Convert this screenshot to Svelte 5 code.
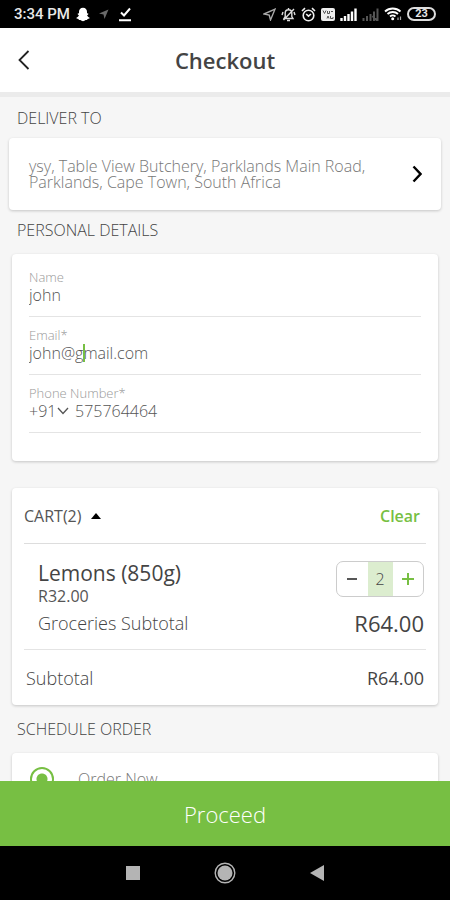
<script>
    let name = $state('john');
    let email = $state('john@gmail.com');
    let dialCode = $state('+91');
    let phone = $state('575764464');
    let schedule = $state('now');
    let cartOpen = $state(true);
    let quantity = $state(2);

    const price = 32;
    let total = $derived('R' + (price * quantity).toFixed(2));

    function decrease() {
        if (quantity > 0) quantity -= 1;
    }
</script>

<div class="screen">
    <div class="status">
        <span class="time">3:34 PM</span>
        <svg class="snap" width="14" height="15" viewBox="0 0 14 15">
            <path fill="#fff" d="M7 .8c2.600 0 4 1.800 4 4v1.500l1.300.2-.1 1-1.100.7c.4 1.300 1.300 2 2.500 2.500l-.2.9-1.900.5-.4 1-1.600-.1C8.700 13.700 8 14.200 7 14.200s-1.700-.5-2.500-1.200l-1.600.1-.4-1-1.900-.5-.2-.9c1.200-.5 2.100-1.200 2.500-2.500l-1.100-.7-.1-1L3 6.300V4.800c0-2.200 1.400-4 4-4z" />
        </svg>
        <svg class="loc" width="10" height="10" viewBox="0 0 10 10">
            <path fill="#6a6a6a" d="M0 4.500 9.500.5 5.500 10 4.500 5.500z" />
        </svg>
        <svg class="done" width="14" height="15" viewBox="0 0 14 15">
            <path fill="none" stroke="#fff" stroke-width="2" d="M3 5.500 6 8.500 12 1.500M1 13.200h12" />
        </svg>

        <div class="right">
            <svg width="13" height="13" viewBox="0 0 13 13">
                <path fill="none" stroke="#aaa" stroke-width="1.400" d="M1 6 12 1.200 7.500 12 6.200 7z" />
            </svg>
            <svg width="15" height="15" viewBox="0 0 15 15">
                <g fill="none" stroke="#ddd" stroke-width="1.400">
                    <path d="M3 11.500h9l-1.200-2V6.200c0-2-1.300-3.500-3.300-3.500S4.200 4.200 4.200 6.200v3.300zM6 13.500h3M7.500 1v1.500M1 8l1-3M14 8l-1-3M2.500 13 13 2" />
                </g>
            </svg>
            <svg width="15" height="15" viewBox="0 0 15 15">
                <g fill="none" stroke="#eee" stroke-width="1.600">
                    <circle cx="7.500" cy="8.500" r="5.300" />
                    <path d="M1 4 4 1.200M14 4 11 1.200M5.200 7l2.300 2.200L10 7" />
                </g>
            </svg>
            <svg width="14" height="13" viewBox="0 0 14 13">
                <rect width="14" height="13" rx="2" fill="#eee" />
                <path fill="none" stroke="#555" stroke-width="1" d="m2 2.500 1.500 3 1.500-3M6.500 3v2.500h2V3M6 10.500 7 8l1 2.500M9.500 8v2.500H12V9M10 3.500h2" />
            </svg>
            <svg width="17" height="13" viewBox="0 0 17 13">
                <path fill="none" stroke="#fff" stroke-width="2.400" d="M1.500 13v-3M5 13V8M8.500 13V6M12 13V3.500M15.500 13V.5" />
            </svg>
            <svg width="17" height="13" viewBox="0 0 17 13">
                <path fill="none" stroke="#555" stroke-width="2" d="M1.500 13v-3M5 13V8M8.500 13V6M12 13V3.500M15.500 13V.5M10.500 8l5 5" />
            </svg>
            <svg width="18" height="14" viewBox="0 0 18 14">
                <g fill="none" stroke="#fff" stroke-width="1.900">
                    <path d="M1 4.500c4.500-4 11-4 15.500 0M3.500 7c3-2.700 7.500-2.700 10.500 0M6 9.500c1.700-1.400 3.800-1.400 5.500 0" />
                    <path stroke="#aaa" stroke-width="1.200" d="M14 13v-2.500M16.500 13v-3.500" />
                </g>
                <circle cx="8.700" cy="11.800" r="1.500" fill="#fff" />
            </svg>
            <span class="battery">23</span>
        </div>
    </div>

    <header>
        <button class="back" type="button" aria-label="Back">
            <svg width="12" height="20" viewBox="0 0 12 20">
                <path fill="none" stroke="#222" stroke-width="1.800" d="M10.500 1 1.500 10l9 9" />
            </svg>
        </button>
        <h1>Checkout</h1>
    </header>

    <main>
        <h2>DELIVER TO</h2>
        <button class="card address" type="button">
            <span>ysy, Table View Butchery, Parklands Main Road, Parklands, Cape Town, South Africa</span>
            <svg width="10" height="18" viewBox="0 0 10 18">
                <path fill="none" stroke="#000" stroke-width="2.400" d="m1.500 1.500 7 7.500-7 7.500" />
            </svg>
        </button>

        <h2>PERSONAL DETAILS</h2>
        <form class="card details">
            <div class="field">
                <label for="name">Name</label>
                <input id="name" type="text" bind:value={name} />
            </div>
            <div class="field">
                <label for="email">Email*</label>
                <input id="email" type="text" bind:value={email} />
                <span class="caret"></span>
            </div>
            <div class="field">
                <label for="phone">Phone Number*</label>
                <div class="phone">
                    <select aria-label="Country code" bind:value={dialCode}>
                        <option>+91</option>
                        <option>+27</option>
                    </select>
                    <svg width="12" height="8" viewBox="0 0 12 8">
                        <path fill="none" stroke="#555" stroke-width="1.300" d="m1 1 5 5.500L11 1" />
                    </svg>
                    <input id="phone" type="tel" bind:value={phone} />
                </div>
            </div>
        </form>

        <section class="card cart">
            <div class="row cart-head">
                <button class="toggle" type="button" onclick={() => (cartOpen = !cartOpen)}>
                    CART(2)
                    <svg class:closed={!cartOpen} width="10" height="6" viewBox="0 0 10 6">
                        <path d="M0 6 5 0l5 6z" />
                    </svg>
                </button>
                <button class="clear" type="button" onclick={() => (quantity = 0)}>Clear</button>
            </div>
            {#if cartOpen}
                <div class="items">
                    <div class="row item">
                        <div>
                            <div class="product">Lemons (850g)</div>
                            <div class="price">R32.00</div>
                        </div>
                        <div class="stepper">
                            <button type="button" aria-label="Less" onclick={decrease}>
                                <svg width="10" height="12" viewBox="0 0 10 12">
                                    <path stroke="#444" stroke-width="1.800" d="M0 6h10" />
                                </svg>
                            </button>
                            <span>{quantity}</span>
                            <button type="button" aria-label="More" onclick={() => (quantity += 1)}>
                                <svg width="12" height="12" viewBox="0 0 12 12">
                                    <path stroke="#77bf43" stroke-width="2" d="M0 6h12M6 0v12" />
                                </svg>
                            </button>
                        </div>
                    </div>
                    <div class="row groceries">
                        <span>Groceries Subtotal</span>
                        <span class="amount">{total}</span>
                    </div>
                </div>
            {/if}
            <div class="row subtotal">
                <span>Subtotal</span>
                <span class="sum">{total}</span>
            </div>
        </section>

        <h2>SCHEDULE ORDER</h2>
        <div class="card schedule">
            <label>
                <input type="radio" name="schedule" value="now" bind:group={schedule} />
                Order Now
            </label>
        </div>
    </main>

    <button class="proceed" type="button">Proceed</button>

    <nav>
        <button type="button" aria-label="Recent apps">
            <svg width="14" height="14" viewBox="0 0 14 14"><path fill="#b4b4b4" d="M0 0h14v14H0z" /></svg>
        </button>
        <button type="button" aria-label="Home">
            <svg width="22" height="22" viewBox="0 0 22 22">
                <circle cx="11" cy="11" r="9.800" fill="none" stroke="#b4b4b4" stroke-width="1.400" />
                <circle cx="11" cy="11" r="7.500" fill="#b4b4b4" />
            </svg>
        </button>
        <button type="button" aria-label="Go back">
            <svg width="14" height="16" viewBox="0 0 14 16"><path fill="#b4b4b4" d="M14 0v16L0 8z" /></svg>
        </button>
    </nav>
</div>

<style>
    :global(body) {
        margin: 0;
        background: #f6f6f6;
    }

    .screen {
        display: flex;
        flex-direction: column;
        height: 100vh;
        font-family: "Open Sans", "Noto Sans", sans-serif;
        font-weight: 300;
        color: #444;
    }

    button,
    input,
    select {
        padding: 0;
        border: none;
        background: none;
        font: inherit;
        color: inherit;
    }

    button {
        cursor: pointer;
    }

    svg {
        display: block;
        flex-shrink: 0;
    }

    .status {
        display: flex;
        align-items: center;
        flex-shrink: 0;
        height: 28px;
        padding: 0 14px;
        background: #000;
        color: #e8e8e8;
        font-family: Roboto, sans-serif;
        font-size: 15px;
        font-weight: 500;
    }

    .snap {
        margin-left: 6px;
    }

    .loc {
        margin-left: 9px;
    }

    .done {
        margin-left: 9px;
    }

    .right {
        display: flex;
        align-items: center;
        gap: 5px;
        margin-left: auto;
    }

    .battery {
        width: 25px;
        border: 2px solid #ddd;
        border-radius: 7px;
        font-size: 11px;
        font-weight: 700;
        line-height: 10px;
        text-align: center;
    }

    header {
        display: flex;
        align-items: center;
        justify-content: center;
        position: relative;
        flex-shrink: 0;
        height: 64px;
        border-bottom: 5px solid #ebebeb;
        background: #fff;
    }

    .back {
        position: absolute;
        left: 18px;
    }

    h1 {
        margin: 0;
        font-size: 22px;
        font-weight: 600;
    }

    main {
        flex: 1;
        min-height: 0;
        padding: 1px 12px 0;
        overflow: hidden;
    }

    h2 {
        margin: 0 5px;
        font-size: 16px;
        font-weight: 300;
        line-height: 40px;
    }

    .card {
        box-sizing: border-box;
        border-radius: 4px;
        background: #fff;
        box-shadow: 0 1px 3px rgba(0, 0, 0, 0.2);
    }

    .address {
        display: flex;
        align-items: center;
        justify-content: space-between;
        width: calc(100% + 6px);
        height: 72px;
        margin: 0 -3px;
        padding: 0 19px 0 20px;
        font-size: 16px;
        line-height: 16px;
        text-align: left;
        color: #777;
    }

    .address span {
        max-width: 350px;
    }

    .details {
        margin: 4px 0 27px;
        padding: 17px 17px 28px;
    }

    .field {
        position: relative;
        padding-bottom: 10px;
        border-bottom: 1px solid #e4e4e4;
        font-size: 16px;
        line-height: 22px;
        color: #555;
    }

    .field + .field {
        padding-top: 12px;
    }

    .field label {
        display: block;
        font-size: 13px;
        line-height: 13px;
        color: #999;
    }

    .field input {
        display: block;
        width: 100%;
        height: 22px;
        outline: none;
    }

    .caret {
        position: absolute;
        left: 54px;
        bottom: 12px;
        width: 2px;
        height: 18px;
        background: #77bf43;
    }

    .phone {
        display: flex;
        align-items: center;
    }

    .phone select {
        width: 29px;
        height: 22px;
        appearance: none;
    }

    .phone svg {
        margin-right: 6px;
    }

    .cart {
        margin-bottom: 4px;
        padding: 0 12px;
    }

    .row {
        display: flex;
        align-items: center;
        justify-content: space-between;
    }

    .cart-head {
        height: 55px;
        border-bottom: 1px solid #ddd;
        font-size: 16px;
    }

    .toggle {
        display: flex;
        align-items: center;
        gap: 10px;
        font-weight: 400;
        color: #555;
    }

    .closed {
        transform: rotate(180deg);
    }

    .clear {
        margin-right: 6px;
        font-weight: 600;
        color: #77bf43;
    }

    .items {
        padding: 17px 2px 10px 14px;
        border-bottom: 1px solid #e4e4e4;
    }

    .item {
        align-items: flex-start;
    }

    .product {
        font-size: 21px;
        font-weight: 400;
        line-height: 24px;
    }

    .price {
        font-size: 16px;
        font-weight: 400;
        line-height: 22px;
        color: #555;
    }

    .stepper {
        display: flex;
        width: 86px;
        height: 34px;
        border: 1px solid #ccc;
        border-radius: 7px;
    }

    .stepper button {
        display: flex;
        flex: 1;
        align-items: center;
        justify-content: center;
    }

    .stepper span {
        width: 25px;
        background: #dcedcf;
        font-size: 16px;
        line-height: 34px;
        text-align: center;
    }

    .groceries {
        font-size: 18px;
        line-height: 32px;
    }

    .amount {
        font-size: 22px;
        font-weight: 400;
    }

    .subtotal {
        height: 54px;
        padding: 1px 2px 0;
        font-size: 18px;
    }

    .sum {
        font-weight: 500;
    }

    .schedule {
        margin-top: 4px;
        padding: 14px 18px;
    }

    .schedule label {
        display: flex;
        align-items: center;
        gap: 24px;
        font-size: 16px;
        line-height: 24px;
        color: #777;
    }

    .schedule input {
        box-sizing: border-box;
        width: 24px;
        height: 24px;
        margin: 0;
        appearance: none;
        border: 2px solid #77bf43;
        border-radius: 50%;
        background: radial-gradient(circle, #77bf43 5px, #fff 6px);
    }

    .proceed {
        flex-shrink: 0;
        height: 65px;
        background: #77bf43;
        font-size: 22px;
        color: #fff;
    }

    nav {
        display: flex;
        align-items: center;
        justify-content: center;
        gap: 74px;
        flex-shrink: 0;
        height: 54px;
        background: #000;
    }
</style>
